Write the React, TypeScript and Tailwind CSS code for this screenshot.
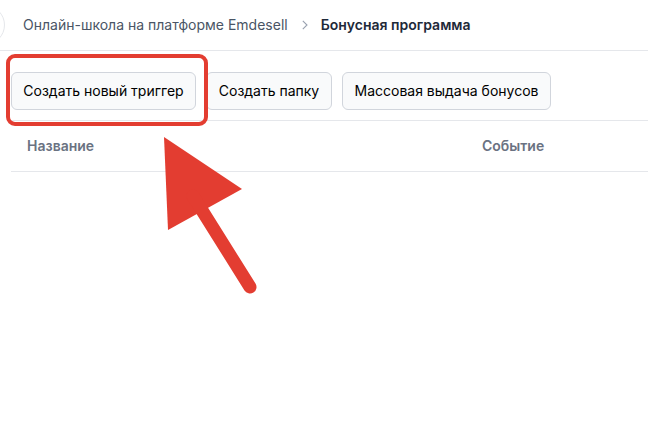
import React from "react";

export default function App() {
  return (
    <div className="relative w-[648px] h-[423px] overflow-hidden bg-white" style={{ fontFamily: "Inter, 'Noto Sans', sans-serif" }}>
      <div className="flex items-center h-[51px] border-b border-gray-200">
        <div className="w-10 h-10 -ml-[35px] rounded-full border border-gray-200 shrink-0" />
        <nav className="flex items-center ml-[18px] text-sm">
          <span className="text-gray-600">Онлайн-школа на платформе Emdesell</span>
          <svg className="ml-[14px] mr-[13px] text-gray-400" width="6" height="10" viewBox="0 0 6 10" fill="none">
            <path d="M0.8 0.8 5 5 0.8 9.2" stroke="currentColor" strokeWidth="1.1" />
          </svg>
          <span className="font-semibold text-gray-800">Бонусная программа</span>
        </nav>
      </div>
      <div className="pl-[12px]">
        <div className="flex gap-[10px] pt-[21px] pb-[10px] border-b border-gray-200 -ml-px">
          <button className="w-[185px] h-[38px] text-sm text-black bg-gray-50 border border-gray-300 rounded-md">Создать новый триггер</button>
          <button className="w-[126px] h-[38px] text-sm text-black bg-gray-50 border border-gray-300 rounded-md">Создать папку</button>
          <button className="w-[209px] h-[38px] text-sm text-black bg-gray-50 border border-gray-300 rounded-md">Массовая выдача бонусов</button>
        </div>
        <div className="flex items-center h-[51px] border-b border-gray-200 text-sm font-semibold text-gray-500 -ml-px">
          <div className="w-[471px] pl-4">Название</div>
          <div>Событие</div>
        </div>
      </div>
      <div className="absolute left-[6px] top-[54px] w-[202px] h-[72px] border-4 border-[#e33d31] rounded-[9px] pointer-events-none" />
      <svg className="absolute left-0 top-0 pointer-events-none" width="648" height="423">
        <polygon points="164,137 168,230 242,189" fill="#e33d31" />
        <line x1="193" y1="196" x2="250" y2="287" stroke="#e33d31" strokeWidth="13" strokeLinecap="round" />
      </svg>
    </div>
  );
}
